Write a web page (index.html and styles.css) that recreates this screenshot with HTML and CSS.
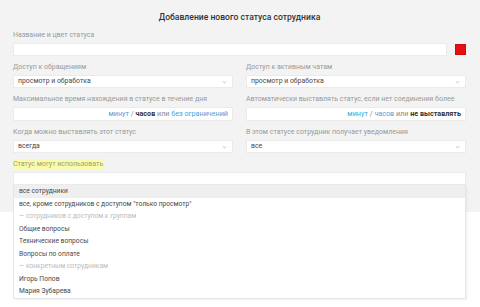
FILE: index.html
```html
<!DOCTYPE html>
<html lang="ru">
<head>
    <meta charset="UTF-8">
    <meta name="viewport" content="width=device-width, initial-scale=1.0">
    <title>Добавление нового статуса сотрудника</title>

    <link rel="stylesheet" href="styles.css">
</head>
<body>
    <div class="status-form">
        <div class="form-title">Добавление нового статуса сотрудника</div>

        <div class="field">
            <div class="field-label">Название и цвет статуса</div>
            <div class="name-row">
                <div class="input"></div>
                <div class="color-box"></div>
            </div>
        </div>

        <div class="columns">
            <div class="field">
                <div class="field-label">Доступ к обращениям</div>
                <div class="input select">просмотр и обработка</div>
            </div>
            <div class="field">
                <div class="field-label">Доступ к активным чатам</div>
                <div class="input select">просмотр и обработка</div>
            </div>

            <div class="field">
                <div class="field-label">Максимальное время нахождения в статусе в течение дня</div>
                <div class="input units">
                    <a class="link">минут</a> / <b>часов</b> или <a class="link">без ограничений</a>
                </div>
            </div>
            <div class="field">
                <div class="field-label">Автоматически выставлять статус, если нет соединения более</div>
                <div class="input units">
                    <a class="link">минут</a> / <a class="link">часов</a> или <b>не выставлять</b>
                </div>
            </div>

            <div class="field">
                <div class="field-label">Когда можно выставлять этот статус</div>
                <div class="input select">всегда</div>
            </div>
            <div class="field">
                <div class="field-label">В этом статусе сотрудник получает уведомления</div>
                <div class="input select">все</div>
            </div>
        </div>

        <div class="field users-field">
            <div class="field-label"><span class="marked">Статус могут использовать</span></div>
            <div class="input"></div>

            <ul class="dropdown">
                <li class="active">все сотрудники</li>
                <li>все, кроме сотрудников с доступом "только просмотр"</li>
                <li class="group">— сотрудников с доступом к группам</li>
                <li>Общие вопросы</li>
                <li>Технические вопросы</li>
                <li>Вопросы по оплате</li>
                <li class="group">— конкретным сотрудникам</li>
                <li>Игорь Попов</li>
                <li>Мария Зубарева</li>
            </ul>
        </div>
    </div>
</body>
</html>
```

FILE: styles.css
```css
html, body {
    min-height: 307px;
}

body {
    margin: 0;
    background: #fff;
    font-family: Roboto, "Liberation Sans", sans-serif;
    color: #333;
}

.status-form {
    background: #f3f3f3;
    height: 212px;
    padding: 11px 14px 0 13px;
    box-sizing: border-box;
}

.form-title {
    text-align: center;
    font-size: 8.6px;
    font-weight: 500;
    line-height: 12px;
    margin-bottom: 7px;
    color: #333;
}

.field {
    margin-bottom: 6px;
}

.field-label {
    font-size: 7px;
    line-height: 10px;
    color: #999;
    margin-bottom: 3px;
    white-space: nowrap;
}

.marked {
    background: #fbfbac;
    padding: 1px 1px 2px 0;
    color: #a0a070;
}

.input {
    height: 13px;
    background: #fff;
    border: 1px solid #ebebeb;
    box-sizing: border-box;
    font-size: 6.9px;
    line-height: 11px;
    padding: 0 5px;
    color: #4a4a4a;
}

.name-row {
    display: flex;
    align-items: center;
    gap: 8px;
}

.name-row .input {
    flex: 1;
}

.color-box {
    width: 11px;
    height: 11px;
    background: #e70f0f;
    border: 1px solid #cc0c0c;
    box-sizing: border-box;
}

.columns {
    display: grid;
    grid-template-columns: 1fr 1fr;
    column-gap: 13px;
}

.select {
    position: relative;
    padding-left: 4px;
}

.select::after {
    content: "";
    position: absolute;
    right: 6px;
    top: 4px;
    width: 2px;
    height: 2px;
    border-right: 1px solid #d5d5d5;
    border-bottom: 1px solid #d5d5d5;
    transform: rotate(45deg);
}

.units {
    height: 14px;
    line-height: 12px;
    text-align: right;
    color: #888;
    font-size: 7.2px;
    padding-right: 4px;
}

.units b {
    color: #333;
    font-weight: 700;
}

.link {
    color: #45a3d8;
}

.users-field {
    position: relative;
}

.dropdown {
    position: absolute;
    left: 0;
    right: 0;
    top: 26px;
    margin: 0;
    padding: 0;
    list-style: none;
    background: #fff;
    border: 1px solid #e6e6e6;
    border-top: none;
    box-shadow: 1px 1px 2px rgba(0, 0, 0, 0.06);
    z-index: 2;
}

.dropdown li {
    height: 12.5px;
    line-height: 12.5px;
    padding-left: 5px;
    font-size: 6.7px;
    color: #4a4a4a;
    white-space: nowrap;
}

.dropdown li.active {
    background: #efefef;
}

.dropdown li.group {
    color: #bbb;
}
```
